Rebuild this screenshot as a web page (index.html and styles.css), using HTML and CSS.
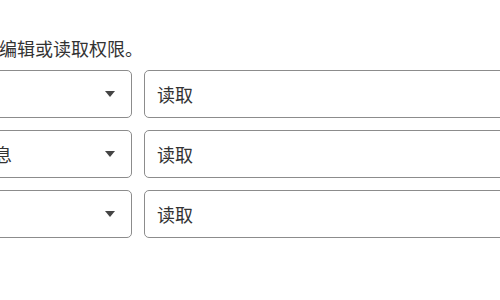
FILE: index.html
```html
<!DOCTYPE html>
<html lang="zh-CN">
<head>
<meta charset="utf-8">
<link rel="stylesheet" href="styles.css">
</head>
<body>
<div class="panel">
  <p class="intro">为成员设置编辑或读取权限。</p>
  <div class="rows">
    <div class="select"><span class="value"></span><span class="caret"></span></div>
    <div class="field">读取</div>
    <div class="select"><span class="value">联系人信息</span><span class="caret"></span></div>
    <div class="field">读取</div>
    <div class="select"><span class="value"></span><span class="caret"></span></div>
    <div class="field">读取</div>
  </div>
</div>
</body>
</html>
```

FILE: styles.css
```css
html, body {
  margin: 0;
  padding: 0;
  background: #ffffff;
  overflow: hidden;
}

body {
  width: 500px;
  height: 300px;
  font-family: "Noto Sans CJK SC", "Noto Sans", sans-serif;
  color: #333333;
}

.panel {
  margin-left: -91px;
  width: 700px;
  padding-top: 36px;
}

.intro {
  margin: 0 0 10px 0;
  font-size: 18px;
  line-height: 24px;
  color: #333333;
  white-space: nowrap;
}

.rows {
  display: grid;
  grid-template-columns: 223px 1fr;
  column-gap: 12px;
  row-gap: 12px;
}

.select,
.field {
  box-sizing: border-box;
  height: 48px;
  border: 1px solid #8c8c8c;
  border-radius: 5px;
  background: #ffffff;
  font-size: 18px;
  line-height: 24px;
  color: #333333;
  display: flex;
  align-items: center;
  white-space: nowrap;
}

.select {
  padding: 0 16px 0 12px;
}

.field {
  padding: 0 12px;
}

.value {
  flex: 1;
}

.caret {
  width: 0;
  height: 0;
  border-left: 5px solid transparent;
  border-right: 5px solid transparent;
  border-top: 6px solid #444444;
  margin-top: -1px;
}
```
